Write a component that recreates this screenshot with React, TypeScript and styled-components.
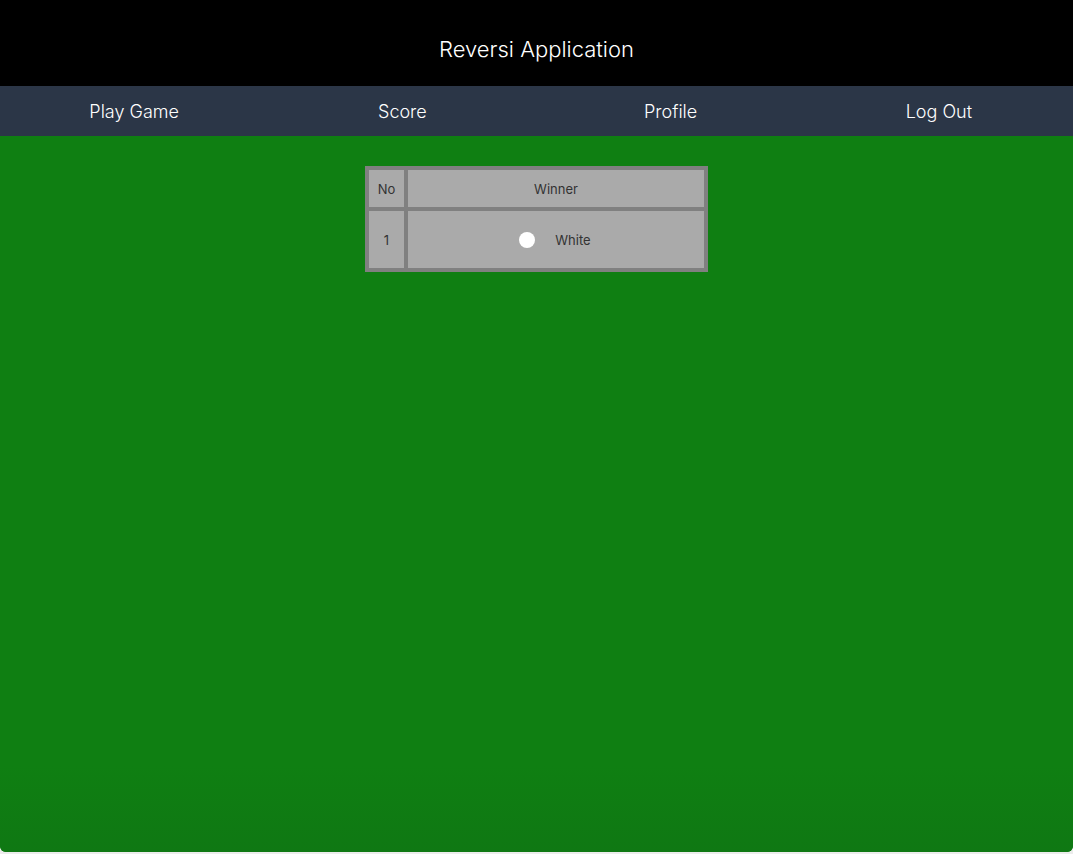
import React from 'react'
import styled, { createGlobalStyle } from 'styled-components'

const GlobalStyle = createGlobalStyle`
  html, body {
    margin: 0;
    padding: 0;
    background: #ececec;
    font-family: Inter, "Noto Sans", "Liberation Sans", sans-serif;
  }
`

const Page = styled.div`
  height: 852px;
  display: flex;
  flex-direction: column;
  background: #0f7f12;
  border-radius: 0 0 6px 6px;
  overflow: hidden;
`

const Header = styled.header`
  height: 86px;
  background: #000;
  color: #fff;
  display: flex;
  align-items: center;
  justify-content: center;
  font-size: 22px;
  font-weight: 300;
  padding-top: 12px;
  box-sizing: border-box;
`

const Nav = styled.nav`
  height: 50px;
  background: #2b3647;
  display: grid;
  grid-template-columns: repeat(4, 1fr);
  align-items: center;
`

const NavItem = styled.a`
  color: #fff;
  font-size: 18px;
  font-weight: 300;
  text-align: center;
  cursor: pointer;
`

const Main = styled.main`
  flex: 1;
  display: flex;
  justify-content: center;
  align-items: flex-start;
  padding-top: 30px;
  background: linear-gradient(#0f7f12 88%, #0f7813);
`

const Table = styled.table`
  border-collapse: separate;
  border-spacing: 4px;
  background: #808080;
  width: 343px;
  color: #333;
  font-size: 13px;
`

const Cell = styled.td<{ $h: number }>`
  background: #aaaaaa;
  height: ${p => p.$h}px;
  padding: 0;
  text-align: center;
  vertical-align: middle;
`

const NoCell = styled(Cell)`
  width: 35px;
`

const Winner = styled.div`
  display: flex;
  align-items: center;
  justify-content: center;
  gap: 20px;
  padding-right: 2px;
`

const Stone = styled.span<{ $color: string }>`
  width: 16px;
  height: 16px;
  border-radius: 50%;
  background: ${p => p.$color};
`

const games = [{ no: 1, winner: 'White' }]

export default function App() {
  return (
    <>
      <GlobalStyle />
      <Page>
        <Header>Reversi Application</Header>
        <Nav>
          <NavItem>Play Game</NavItem>
          <NavItem>Score</NavItem>
          <NavItem>Profile</NavItem>
          <NavItem>Log Out</NavItem>
        </Nav>
        <Main>
          <Table>
            <tbody>
              <tr>
                <NoCell $h={37}>No</NoCell>
                <Cell $h={37}>Winner</Cell>
              </tr>
              {games.map(g => (
                <tr key={g.no}>
                  <NoCell $h={57}>{g.no}</NoCell>
                  <Cell $h={57}>
                    <Winner>
                      <Stone $color={g.winner === 'White' ? '#fff' : '#000'} />
                      {g.winner}
                    </Winner>
                  </Cell>
                </tr>
              ))}
            </tbody>
          </Table>
        </Main>
      </Page>
    </>
  )
}
